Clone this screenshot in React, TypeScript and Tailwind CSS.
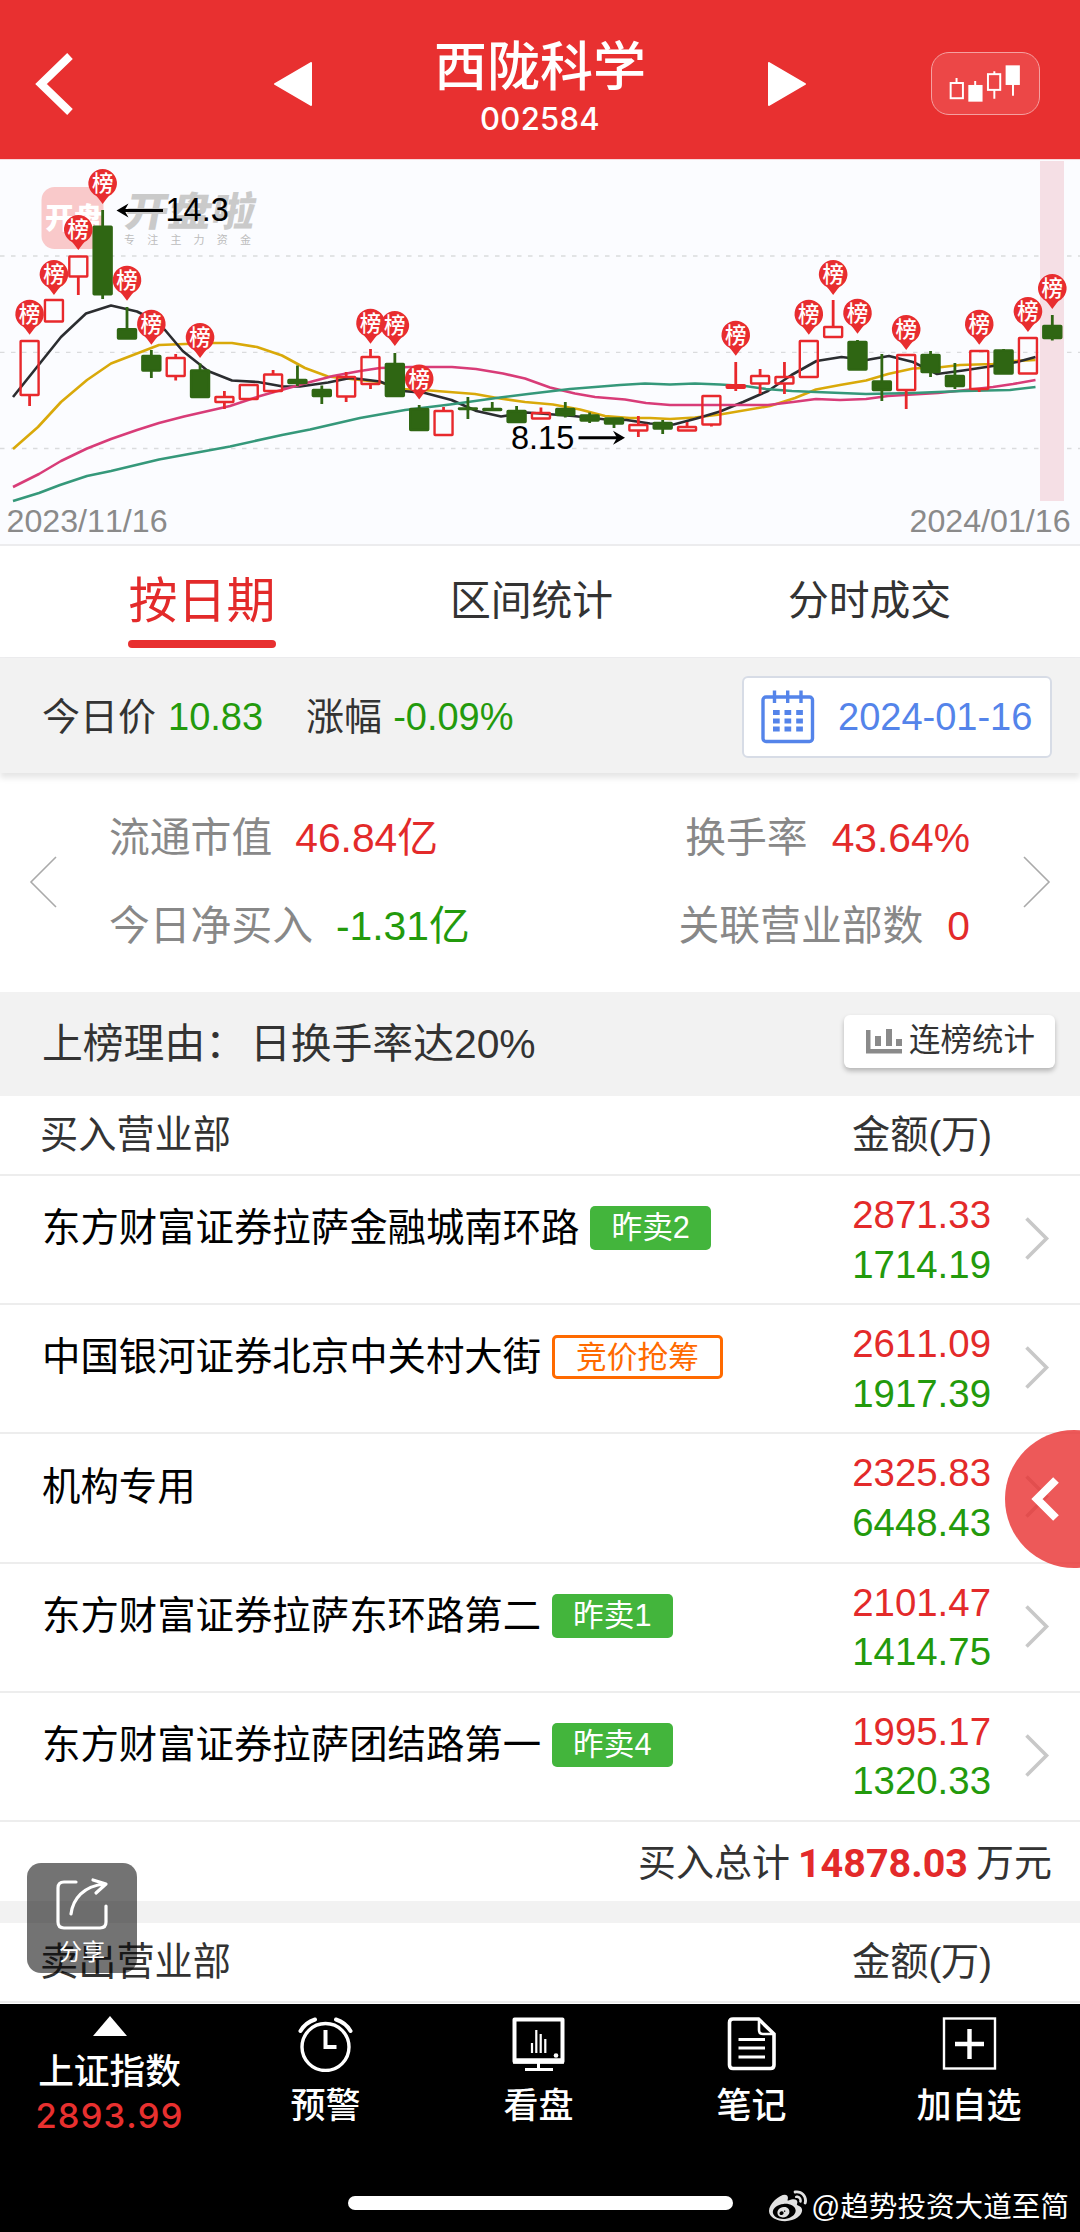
import React from "react";
import { FaWeibo } from "react-icons/fa";

type Candle = [high: number, top: number, bottom: number, low: number, up: boolean];

const candles: Candle[] = [
  [180, 180, 236, 246, true],
  [139, 139, 162.5, 162.5, true],
  [95.5, 95.5, 117.5, 135, true],
  [50, 65.7, 135.3, 139, false],
  [147, 168.3, 179.5, 179.5, false],
  [190, 195, 211.5, 218, false],
  [194, 197, 217, 220.5, true],
  [203.5, 209.5, 238, 238, false],
  [231, 236, 243, 249, true],
  [224, 224, 240, 240, true],
  [210, 213.5, 232, 233, true],
  [205.5, 219, 224, 226, false],
  [225.5, 229, 237, 244, false],
  [212, 216, 237.5, 242, true],
  [189, 196, 225, 229, true],
  [193, 203, 237, 237, false],
  [245, 248, 271, 271, false],
  [247, 250, 276, 276, true],
  [237, 247.5, 250, 259, false],
  [242, 248, 251, 251, false],
  [246, 250, 263, 263, false],
  [247.5, 252, 259.5, 259.5, true],
  [242, 248, 256, 257.5, false],
  [252.5, 254.5, 261.5, 263, false],
  [257.5, 257.5, 264.5, 268, false],
  [256, 264, 271.5, 277, true],
  [260, 262, 269.5, 274, false],
  [262, 266, 271.5, 271.5, true],
  [235, 235, 265.5, 266.5, true],
  [202, 224.3, 228.7, 231, true],
  [209, 215, 224.5, 234, true],
  [202, 216, 224.5, 234, true],
  [180, 180, 218, 218, true],
  [140, 166, 178, 178, true],
  [180, 181, 210.5, 210.5, false],
  [194, 220.5, 231, 241, false],
  [194, 194, 231, 249, true],
  [191, 194, 213, 217, false],
  [203, 215, 227, 229, false],
  [190, 190, 230, 232, true],
  [189, 189.5, 214.5, 214.5, false],
  [177, 177, 214.5, 214.5, true],
  [155, 165, 179, 180.5, false],
];

// candle index -> top of its pin
const pins: [number, number][] = [
  [0, 139.7], [1, 100], [2, 55], [3, 9], [4, 105.7], [5, 149.7], [7, 163],
  [14, 148.7], [15, 151], [16, 204.5], [29, 160.7], [32, 139.7], [33, 100],
  [34, 138.7], [36, 155], [39, 149.7], [41, 137], [42, 114],
];

const averages = [
  {
    color: "#d9a90a",
    points:
      "13,289 38,267 61,242 87,220 111,203.5 137,193.5 159,185 185,184 210,183 232,183 257,187 282,195.5 305,208 328,216.5 360,220 380,222 400,229 430,230.5 475,234 500,238.5 525,242 553,244.5 580,249.5 605,256 630,258 650,258 670,259 695,257.5 720,254.5 770,246 795,238 816,229.5 840,225 866,220.5 888,214 913,208.5 938,207.5 960,205 993,204 1013,201 1035.5,200",
  },
  {
    color: "#2b2d30",
    points:
      "13,237 37,207 61,177 86,153.5 111,145.5 137,151.5 152,159 165,170 182.7,191 208,211 232,220.5 258,222 283,226.5 300,226.5 328,222.5 350,218 360,219 380,221.5 403,231 425,233 451.5,240 476.5,251 501,256.5 526.5,252.5 547,254 573,256 606.5,259.5 626.5,260 650,263.5 673.5,264.5 696.5,258.5 720,251.5 743,242 768,231 791.5,215 816.5,201 841.5,197 866.5,200 889,196 913,202 937,214 963,210.5 993,206 1017,202 1035.5,197",
  },
  {
    color: "#d83c78",
    points:
      "13,327 39,314 61,301 87,288.5 111,279 137,270 159,263 184,256.5 230,246 260,236 285,229 312,221.5 333,216 360,211 380,208 410,207 452,207 476,209 503,213.5 525,218.5 550,227.5 575,233.5 595,237 625,239.5 646,243 670,245 768,245 793,242 816,239 840,240 866,239 888,236 938,233 966,230 993,227 1013,224 1035.5,220",
  },
  {
    color: "#35987a",
    points:
      "13,341 39,333 60,325 87,316 111,311 159,299.5 230,286.5 282,275 310,269.5 360,258 405,250 450,244.5 500,237.5 528,234 570,229 620,225 645,223.5 670,224.5 695,223.5 720,224.5 745,226 766,229 792,231 816,232 866,234 913,233 963,231 1010,230 1035.5,227",
  },
];

const candleX = (i: number) => 29.6 + i * 24.35;

function KLineChart() {
  return (
    <svg
      width="1080"
      height="384"
      viewBox="0 0 1080 384"
      className="block bg-[#fbfcff] font-['Liberation_Sans','Noto_Sans_CJK_SC',sans-serif]"
    >
      {/* brand watermark */}
      <rect x="41.5" y="27" width="62" height="62" rx="13" fill="#f9c9ca" />
      <text x="45" y="69" fontSize="29" fontWeight="900" fill="#fff">
        开盘
      </text>
      <text x="0" y="0" fontSize="43" fontWeight="900" fill="#cacaca" transform="translate(123 65.5) scale(1 0.93) skewX(-10)" textLength="130">
        开盘啦
      </text>
      <text x="124" y="84" fontSize="11" fill="#bdbdbd" letterSpacing="12.2">
        专注主力资金
      </text>

      {[96, 192.3, 288.5].map((y) => (
        <line key={y} x1="0" x2="1080" y1={y} y2={y} stroke="#dadbdd" strokeWidth="1.3" strokeDasharray="4.5 6.5" />
      ))}
      <rect x="1040" y="1" width="24" height="340" fill="#f5dfe5" />

      {averages.map((line) => (
        <polyline key={line.color} points={line.points} fill="none" stroke={line.color} strokeWidth="2.6" strokeLinejoin="round" />
      ))}

      {candles.map(([high, top, bottom, low, up], i) => {
        const x = candleX(i);
        const color = up ? "#e8282c" : "#2f6613";
        return (
          <g key={i} stroke={color} strokeWidth="2.8">
            {high < top && <line x1={x} x2={x} y1={high} y2={top + 1} />}
            {low > bottom && <line x1={x} x2={x} y1={bottom - 1} y2={low} />}
            <rect
              x={x - 9}
              y={top + 1}
              width="18"
              height={Math.max(bottom - top - 2, 0.5)}
              rx="0.5"
              strokeWidth="2.4"
              strokeLinejoin="round"
              fill={up ? "none" : color}
            />
          </g>
        );
      })}

      {pins.map(([i, top]) => (
        <g key={i} transform={`translate(${candleX(i)} ${top})`}>
          <path d="M0 35L-4.500 29Q-6 27-8.800 25.600A14.300 14.300 0 1 1 8.800 25.600Q6 27 4.500 29Z" fill="#e82d2f" />
          <text x="0" y="22" fontSize="21.5" fontWeight="500" fill="#fff" textAnchor="middle">
            榜
          </text>
        </g>
      ))}

      <path d="M119 50.5H163" stroke="#000" strokeWidth="3" />
      <path d="M116.500 50.500L128.500 43.500L124.500 50.500L128.500 57.500Z" fill="#000" />
      <text x="165.500" y="61" fontSize="32.500" fill="#000">
        14.3
      </text>
      <path d="M578.500 277.700H622" stroke="#000" strokeWidth="3" />
      <path d="M625 277.700L613 270.700L617 277.700L613 284.700Z" fill="#000" />
      <text x="511" y="289" fontSize="32.500" fill="#000">
        8.15
      </text>

      <text x="6.500" y="371.500" fontSize="32.200" fill="#8a8a8a">
        2023/11/16
      </text>
      <text x="909.500" y="371.500" fontSize="32.200" fill="#8a8a8a">
        2024/01/16
      </text>
    </svg>
  );
}

function Header() {
  return (
    <header className="flex h-[160px] items-center border-b border-[#f7d8da] bg-[#e83030] pl-[34px] pr-[40px] pt-2 text-white">
      <svg width="40" height="62" viewBox="0 0 40 62" className="mr-[200px] shrink-0">
        <path d="M36 3L7 31L36 59" fill="none" stroke="#fff" strokeWidth="8" />
      </svg>
      <svg width="38" height="44" viewBox="0 0 38 44" className="shrink-0">
        <path d="M37 1V43L1 22Z" fill="#fff" stroke="#fff" strokeWidth="2" strokeLinejoin="round" />
      </svg>
      <div className="flex flex-1 flex-col items-center">
        <h1 className="mt-[6px] h-[64px] text-[53px] font-medium leading-[64px]">西陇科学</h1>
        <span className="h-[38px] font-['Inter'] text-[31px] font-medium leading-[38px] tracking-[0.300px]">002584</span>
      </div>
      <svg width="38" height="44" viewBox="0 0 38 44" className="mr-[125px] shrink-0">
        <path d="M1 1V43L37 22Z" fill="#fff" stroke="#fff" strokeWidth="2" strokeLinejoin="round" />
      </svg>
      <button className="flex h-[63px] w-[109px] shrink-0 items-center justify-center rounded-[18px] border border-[#f5a0a0] bg-[#ec4747]">
        <svg width="109" height="63" viewBox="0 0 109 63" fill="none" stroke="#fff" strokeWidth="2">
          <rect x="19" y="31" width="12.500" height="15.500" />
          <path d="M25 26V31M44 29V34M63.500 19V22M63.500 38V47M82.500 32V44" />
          <rect x="38" y="34" width="12.500" height="15" fill="#fff" />
          <rect x="57" y="22" width="12.500" height="16" />
          <rect x="76" y="14" width="12.500" height="18" fill="#fff" />
        </svg>
      </button>
    </header>
  );
}

function Tabs() {
  return (
    <nav className="flex h-[114px] border-b border-t-2 border-[#ececee] text-[40.800px] leading-[111px] text-[#333]">
      <div className="flex w-[404px] justify-center">
        <div className="flex w-[148px] flex-col items-center text-[49px] text-[#e32a2a]">
          <span className="h-[94px] leading-[111px]">按日期</span>
          <span className="h-2 w-full rounded-full bg-[#e83030]" />
        </div>
      </div>
      <div className="w-[255px] text-center">区间统计</div>
      <div className="flex-1 text-center">分时成交</div>
    </nav>
  );
}

function CalendarIcon() {
  return (
    <svg width="54" height="54" viewBox="0 0 54 54" fill="none" stroke="#5484ea" strokeWidth="3.400">
      <rect x="2" y="7" width="49.500" height="44.500" rx="3" />
      <path d="M13.500 0.500V13M26.700 0.500V13M40 0.500V13" />
      <g fill="#5484ea" stroke="none">
        {[20, 28.500, 36.500].map((y) =>
          [12, 23.500, 35.200].map((x) => <rect key={`${x}-${y}`} x={x} y={y} width="6.700" height="5" />)
        )}
      </g>
    </svg>
  );
}

function PriceBar() {
  return (
    <section className="relative flex h-[115px] items-center justify-between bg-[#f2f2f2] pl-[42px] pr-[28px] text-[38px] text-[#333] shadow-[0_5px_6px_rgba(0,0,0,0.1)]">
      <div className="flex pt-1">
        <span>今日价</span>
        <span className="ml-[12px] text-[#239a0c]">10.83</span>
        <span className="ml-[43px]">涨幅</span>
        <span className="ml-[11px] text-[#239a0c]">-0.09%</span>
      </div>
      <button className="mt-[2px] flex h-[82px] w-[310px] items-center rounded-md border-2 border-[#d7dce6] bg-white pl-[17px] text-[#5484ea]">
        <CalendarIcon />
        <span className="ml-[23px] whitespace-nowrap pt-px">2024-01-16</span>
      </button>
    </section>
  );
}

function Summary() {
  return (
    <section className="flex h-[219px] items-center justify-between pb-[2px] pl-[29px] pr-[29px] text-[40.800px] leading-[88px] text-[#888]">
      <svg width="28" height="52" viewBox="0 0 28 52" fill="none" stroke="#aaa" strokeWidth="1.600">
        <path d="M27 1L2 26L27 51" />
      </svg>
      <div className="ml-[52px] flex-1 pt-px">
        <div>
          流通市值<span className="ml-[23px] text-[#e32a2a]">46.84亿</span>
        </div>
        <div>
          今日净买入<span className="ml-[23px] text-[#239a0c]">-1.31亿</span>
        </div>
      </div>
      <div className="mr-[53px] pt-px text-right">
        <div>
          换手率<span className="ml-[24px] text-[#e32a2a]">43.64%</span>
        </div>
        <div>
          关联营业部数<span className="ml-[24px] text-[#e32a2a]">0</span>
        </div>
      </div>
      <svg width="28" height="52" viewBox="0 0 28 52" fill="none" stroke="#aaa" strokeWidth="1.600">
        <path d="M1 1L26 26L1 51" />
      </svg>
    </section>
  );
}

function ReasonBar() {
  return (
    <section className="flex h-[104px] items-center justify-between bg-[#f2f2f2] pl-[42px] pr-[25px] text-[40.800px] text-[#333]">
      <div className="flex gap-[4px] pt-px">
        <span>上榜理由：</span>
        <span>日换手率达20%</span>
      </div>
      <button className="mb-[6px] flex h-[53px] w-[211px] items-center rounded-md bg-white pl-[22px] text-[31.500px] shadow-[0_3px_5px_rgba(0,0,0,0.25)]">
        <svg width="37" height="26" viewBox="0 0 37 26" fill="#8a8a8a">
          <path d="M0 2H4.500V21H36V25.500H0ZM9 8H15V18H9ZM20 1H26V18H20ZM30 11H36V18H30Z" />
        </svg>
        <span className="ml-[6px] whitespace-nowrap">连榜统计</span>
      </button>
    </section>
  );
}

const brokers = [
  { name: "东方财富证券拉萨金融城南环路", tag: "昨卖2", buy: "2871.33", sell: "1714.19" },
  { name: "中国银河证券北京中关村大街", tag: "竞价抢筹", outline: true, buy: "2611.09", sell: "1917.39" },
  { name: "机构专用", buy: "2325.83", sell: "6448.43" },
  { name: "东方财富证券拉萨东环路第二", tag: "昨卖1", buy: "2101.47", sell: "1414.75" },
  { name: "东方财富证券拉萨团结路第一", tag: "昨卖4", buy: "1995.17", sell: "1320.33" },
];

function ListHeader({ title }: { title: string }) {
  return (
    <div className="flex h-[80px] justify-between border-b-2 border-[#ededed] pl-[40px] pr-[88px] text-[38.200px] leading-[78px] text-[#333]">
      <span>{title}</span>
      <span>金额(万)</span>
    </div>
  );
}

function BrokerRow({ broker }: { broker: (typeof brokers)[number] }) {
  return (
    <li className="flex h-[129.200px] border-b-2 border-[#ededed] pl-[42px] pr-[30px] text-[38.400px]">
      <div className="mt-[30px] flex h-[44px] flex-1 items-center text-black">
        <span>{broker.name}</span>
        {broker.tag && (
          <span
            className={`ml-[11px] flex h-[44px] items-center rounded-[5px] px-[21px] pt-px text-[30.700px] ${
              broker.outline ? "border-[3px] border-[#ff6a00] text-[#ff6a00]" : "bg-[#43b53c] text-white"
            }`}
          >
            {broker.tag}
          </span>
        )}
      </div>
      <div className="mr-[34px] mt-[14px] text-right leading-[49.500px]">
        <div className="text-[#e32a2a]">{broker.buy}</div>
        <div className="text-[#239a0c]">{broker.sell}</div>
      </div>
      <svg width="25" height="43" viewBox="0 0 25 43" className="mt-[41px]" fill="none" stroke="#c8c8c8" strokeWidth="3.600">
        <path d="M1.500 1.500L21.500 21.500L1.500 41.500" />
      </svg>
    </li>
  );
}

function ShareButton() {
  return (
    <button className="absolute left-[27px] top-[1863px] flex h-[110px] w-[110px] flex-col items-center rounded-[14px] bg-black/55 pt-[14px] text-white">
      <svg width="54" height="54" viewBox="0 0 54 54" fill="none" stroke="#fff" strokeWidth="3.200" strokeLinecap="round" strokeLinejoin="round">
        <path d="M21 5H9Q3 5 3 11V45Q3 51 9 51H45Q51 51 51 45V29" />
        <path d="M16 37C18 22 28 9 50 7M38 3L51 7L41 16" />
      </svg>
      <span className="mt-[4px] text-[23px] leading-[34px]">分享</span>
    </button>
  );
}

const tools = [
  {
    label: "预警",
    icon: (
      <>
        <circle cx="27.500" cy="30" r="23.500" strokeWidth="3.400" />
        <path d="M27.500 13V30H38.500" strokeWidth="4" />
        <path d="M2.500 14Q7.500 5.500 17 2.500M52.500 14Q47.500 5.500 38 2.500" strokeWidth="4" strokeLinecap="round" />
      </>
    ),
  },
  {
    label: "看盘",
    icon: (
      <>
        <path d="M3.500 2.500H51.500V44.500H3.500Z" strokeWidth="4" strokeLinejoin="round" />
        <path d="M2 44H53" strokeWidth="5.500" />
        <path d="M27.500 45V53M14 52.500H42" strokeWidth="3" />
        <path d="M21 26V36M25.300 13V36M29.700 17V36M34.300 22V36" strokeWidth="2.200" />
        <circle cx="45" cy="38.500" r="2.300" fill="#fff" stroke="none" />
      </>
    ),
  },
  {
    label: "笔记",
    icon: (
      <>
        <path d="M9 2H34.500L50 17V48Q50 51.500 46.500 51.500H9Q5.500 51.500 5.500 48V5.500Q5.500 2 9 2Z" strokeWidth="3.600" />
        <path d="M35 3V13Q35 17 39 17H49" strokeWidth="2.600" />
        <path d="M14.500 22.500H41M14.500 31H41M14.500 40H41" strokeWidth="2.800" />
      </>
    ),
  },
  {
    label: "加自选",
    icon: (
      <>
        <rect x="2" y="1.500" width="51" height="50" strokeWidth="2.400" />
        <path d="M27.500 12V42M13 27H42" strokeWidth="4.400" />
      </>
    ),
  },
];

function BottomBar() {
  return (
    <footer className="relative flex h-[228px] flex-col bg-black text-white">
      <div className="flex h-[192px]">
        <div className="flex w-[219px] flex-col items-center pt-3">
          <svg width="34" height="20" viewBox="0 0 34 20">
            <path d="M17 0L34 20H0Z" fill="#fff" />
          </svg>
          <span className="mt-[11px] h-[50px] text-[35.700px] font-medium leading-[50px]">上证指数</span>
          <span className="mt-[-4px] font-['Inter'] text-[34.500px] font-medium leading-[46px] tracking-[1.100px] text-[#e8302f]">
            2893.99
          </span>
        </div>
        {tools.map((tool) => (
          <div key={tool.label} className="flex w-[213px] flex-col items-center pt-[13px] last:flex-1">
            <svg width="55" height="55" viewBox="0 0 55 55" fill="none" stroke="#fff">
              {tool.icon}
            </svg>
            <span className="mt-[9px] text-[35px] font-medium leading-[50px]">{tool.label}</span>
          </div>
        ))}
      </div>
      <div className="mx-auto h-[14px] w-[385px] rounded-full bg-white" />
      <div className="absolute right-[11px] top-[181px] flex items-center text-[28.600px] leading-[44px]">
        <FaWeibo className="mr-[4px] size-[38px] text-[#e2e2e2]" />
        <span>@趋势投资大道至简</span>
      </div>
    </footer>
  );
}

export default function App() {
  return (
    <div className="relative flex h-[2232px] w-[1080px] flex-col overflow-hidden bg-white font-['Liberation_Sans','Noto_Sans_CJK_SC',sans-serif] [font-kerning:none]">
      <Header />
      <KLineChart />
      <Tabs />
      <PriceBar />
      <Summary />
      <ReasonBar />
      <main className="h-[908px] overflow-hidden">
        <ListHeader title="买入营业部" />
        <ul>
          {brokers.map((broker) => (
            <BrokerRow key={broker.name} broker={broker} />
          ))}
        </ul>
        <div className="flex h-[79px] items-center justify-end pr-[28px] pt-1 text-[38px] text-[#333]">
          买入总计
          <span className="mx-[8px] font-['Roboto'] text-[39.500px] font-bold text-[#e32a2a]">14878.03</span>
          万元
        </div>
        <div className="h-[22px] bg-[#f2f2f2]" />
        <ListHeader title="卖出营业部" />
      </main>
      <BottomBar />

      {/* drawer handle on the right edge */}
      <button className="absolute left-[1005px] top-[1430px] flex size-[138px] items-center rounded-full bg-[#e83030]/80 pl-[26px]">
        <svg width="30" height="46" viewBox="0 0 30 46" fill="none" stroke="#fff" strokeWidth="8">
          <path d="M25 4L6 23L25 42" />
        </svg>
      </button>
      <ShareButton />
    </div>
  );
}
